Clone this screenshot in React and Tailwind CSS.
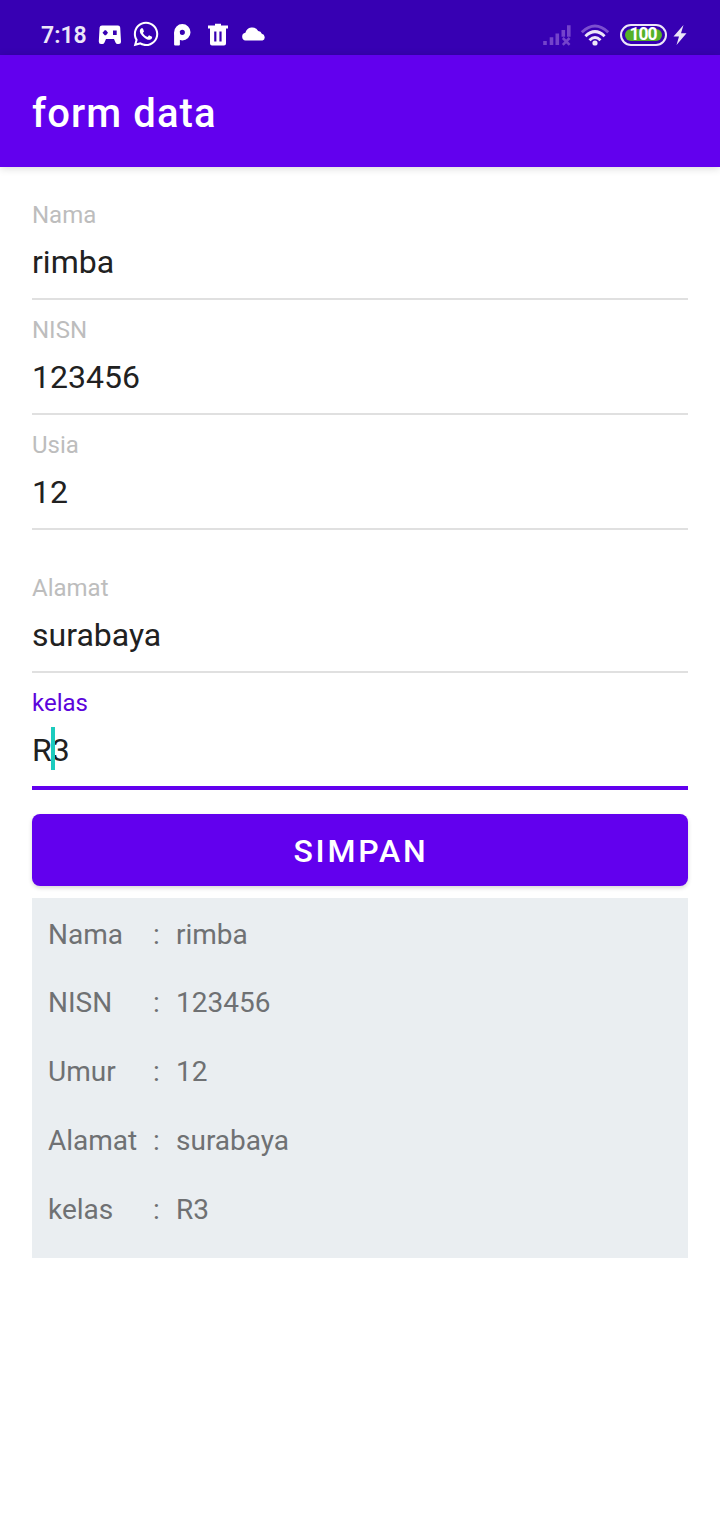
import { FaWhatsapp } from 'react-icons/fa';

function Gamepad() {
  return (
    <svg className="h-[20px] w-[24px]" viewBox="0 0 24 20">
      <path fill="#fff" fillRule="evenodd" d="M4 .5H20Q22 .5 22.2 2.5L23 16.5Q23 19 20.5 19H19.5Q18.3 19 17.5 17.5L16 14H8L6.5 17.5Q5.7 19 4.5 19H3Q.8 19 .8 16.5L1.6 2.5Q1.8 .5 4 .5ZM6.7 5.3L4.5 7.8L6.7 10.3H8L10 7.8L8 5.3ZM15 5.5V10H18.7V5.5Z" />
    </svg>
  );
}

function AppMark() {
  return (
    <svg className="h-[24px] w-[18px]" viewBox="0 0 18 24">
      <circle cx="9.3" cy="9.3" r="5.4" fill="none" stroke="#fff" strokeWidth="5.6" />
      <rect x="1.1" y="9" width="5.8" height="13.5" rx="1" fill="#fff" />
    </svg>
  );
}

function Trash() {
  return (
    <svg className="h-[24px] w-[22px]" viewBox="0 0 22 24">
      <path fill="#fff" fillRule="evenodd" d="M8 .8H14V2.5H21V5.5H19V20.5Q19 22.5 17 22.5H5Q3 22.5 3 20.5V5.5H1V2.5H8ZM7.2 8.5V18.5H9.4V8.5ZM12.4 8.5V18.5H14.6V8.5Z" />
    </svg>
  );
}

function Cloud() {
  return (
    <svg className="h-[16px] w-[26px]" viewBox="0 0 26 16">
      <path fill="#fff" d="M4.5 14.5A3.9 3.9 0 0 1 4.4 6.8A7 7 0 0 1 17.2 4.9A4.2 4.2 0 0 1 20.8 7.8A3.5 3.5 0 0 1 21.5 14.5Z" />
    </svg>
  );
}

function Signal() {
  return (
    <svg className="h-[22px] w-[28px]" viewBox="0 0 28 22" fill="none" stroke="#7443cb">
      <path strokeWidth="3.6" d="M2 17V21M8.5 13.2V21M14.3 9.5V21M20.3 6V12.8M25.8 1.2V12.8" />
      <path strokeWidth="2.5" d="M19.8 14L26.6 20.8M26.6 14L19.8 20.8" />
    </svg>
  );
}

function Wifi() {
  return (
    <svg className="h-[22px] w-[30px]" viewBox="0 0 30 22" fill="none" stroke="#ece6f8" strokeWidth="2.9">
      <path stroke="#7c50cf" d="M1.8 8.2Q15 -4.2 28.2 8.2" />
      <path d="M5.4 12.2Q15 3 24.6 12.2M9.5 16.2Q15 10.8 20.5 16.2" />
      <circle cx="15" cy="19" r="2.6" fill="#ece6f8" stroke="none" />
    </svg>
  );
}

function StatusBar() {
  return (
    <div className="flex h-[55px] items-center bg-[#3700b3] pt-[14px] pl-[41px]">
      <span className="w-[57px] pt-[2px] text-[23px] leading-none font-semibold text-[#ece6f8]">7:18</span>
      <Gamepad />
      <FaWhatsapp className="mb-[2px] ml-[10px] size-[28px] text-white" />
      <span className="ml-[13px] flex"><AppMark /></span>
      <span className="ml-[16px] flex"><Trash /></span>
      <span className="mb-[2px] ml-[12px] flex"><Cloud /></span>
      <span className="ml-[276px] flex"><Signal /></span>
      <span className="ml-[9px] flex pt-[1px]"><Wifi /></span>
      <div className="ml-[10px] flex h-[22px] w-[47px] rounded-full border-2 border-[#ece6f8] p-[3px]">
        <div className="flex flex-1 items-center justify-center rounded-full bg-[#55b128] pr-[1px] text-[17.5px] leading-none font-bold tracking-[-1px] text-white">
          100
        </div>
      </div>
      <svg className="ml-[6px] h-[22px] w-[14px]" viewBox="0 0 14 22">
        <path fill="#ece6f8" d="M10.5 1L.5 12.5H6L3.5 21L13.5 9.2H8Z" />
      </svg>
    </div>
  );
}

function Field({ label, value }) {
  return (
    <div className="h-[115px] border-b-2 border-[#e0e0e0] pt-[16px]">
      <div className="h-[42px] text-[24px] leading-[28px] text-[#bdbdbd]">{label}</div>
      <div className="text-[32px] leading-[38px] text-[#212121]">{value}</div>
    </div>
  );
}

function ActiveField() {
  return (
    <div className="h-[117px] border-b-4 border-[#6200ee] pt-[16px]">
      <div className="h-[42px] text-[24px] leading-[28px] text-[#5c04dc]">kelas</div>
      <div className="relative text-[32px] leading-[38px] text-[#212121]">
        R3
        <span className="absolute top-[-4px] left-[19px] h-[43px] w-[4px] bg-[#1ccbbd]" />
      </div>
    </div>
  );
}

const rows = [
  ['Nama', 'rimba'],
  ['NISN', '123456'],
  ['Umur', '12'],
  ['Alamat', 'surabaya'],
  ['kelas', 'R3'],
];

export default function App() {
  return (
    <div className="min-h-[1520px] w-[720px] bg-white font-['Roboto',sans-serif]">
      <StatusBar />
      <header className="flex h-[112px] items-center bg-[#6200ee] pt-[6px] pl-[32px] text-[40px] font-medium tracking-[1.1px] text-white shadow-[0_1px_8px_rgba(0,0,0,0.17)]">
        form data
      </header>
      <main className="px-[32px] pt-[18px]">
        <Field label="Nama" value="rimba" />
        <Field label="NISN" value="123456" />
        <Field label="Usia" value="12" />
        <div className="h-[28px]" />
        <Field label="Alamat" value="surabaya" />
        <ActiveField />
        <button className="mt-[24px] flex h-[72px] w-full items-center justify-center rounded-[8px] bg-[#6200ee] pt-[2px] pl-[2px] text-[32px] font-medium tracking-[2.8px] text-white shadow-[0_2px_4px_rgba(0,0,0,0.16)]">
          SIMPAN
        </button>
        <div className="mt-[12px] h-[360px] bg-[#eaeef1] pt-[7.6px] pl-[16px] text-[28px] leading-[33px] text-[#6f7173]">
          {rows.map(([name, value]) => (
            <div key={name} className="flex h-[68.75px] pt-[12px]">
              <span className="w-[105px]">{name}</span>
              <span className="w-[23px]">:</span>
              <span>{value}</span>
            </div>
          ))}
        </div>
      </main>
    </div>
  );
}
